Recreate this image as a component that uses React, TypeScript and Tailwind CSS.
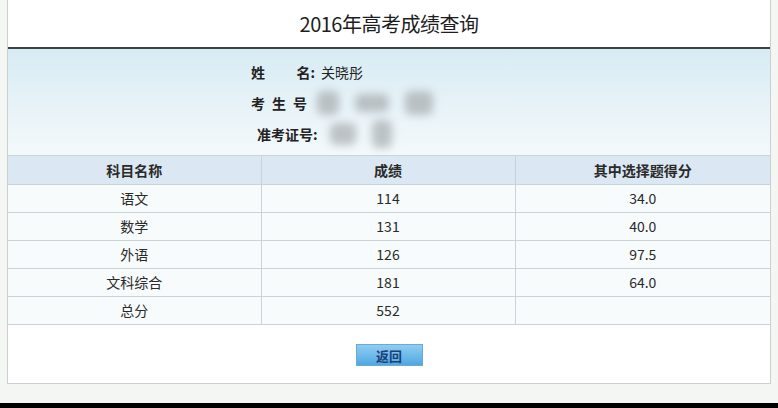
const rows = [
  { subject: "语文", score: "114", choice: "34.0" },
  { subject: "数学", score: "131", choice: "40.0" },
  { subject: "外语", score: "126", choice: "97.5" },
  { subject: "文科综合", score: "181", choice: "64.0" },
  { subject: "总分", score: "552", choice: "" },
]

const font = { fontFamily: '"Noto Sans CJK SC", "Noto Sans", sans-serif' }
const cellClass = "border-r border-b border-[#c9d3d8] text-center align-middle"

function Blur({ className }: { className: string }) {
  return <span className={`inline-block rounded-[6px] bg-[#9a9fa2] blur-[4px] opacity-60 ${className}`} />
}

export default function App() {
  return (
    <div className="w-[778px] h-[408px] bg-[#f4f6f4] flex flex-col overflow-hidden text-[#222]" style={font}>
      <div className="mx-[7px] h-[384px] bg-white border-x border-b border-[#c9d0cf] flex flex-col">
        <div className="h-[47px] flex items-center justify-center text-[20px] text-[#1e1e1e] tracking-tight">
          2016年高考成绩查询
        </div>
        <div className="h-[2px] bg-[#3c4340]" />

        <div className="h-[106px] bg-gradient-to-b from-[#d7ebf4] via-[#e6f2f7] to-[#f4f9fb] flex flex-col pl-[243px] pt-[12px] gap-[9px] text-[14px] font-bold">
          <div className="flex items-center h-[22px]">
            <span className="w-[66px] flex justify-between pr-[2px]">
              <span>姓</span>
              <span>名:</span>
            </span>
            <span className="font-normal ml-[4px]">关晓彤</span>
          </div>
          <div className="flex items-center h-[22px]">
            <span className="w-[56px] flex justify-between">
              <span>考</span>
              <span>生</span>
              <span>号</span>
            </span>
            <span className="flex items-center gap-[16px] ml-[10px]">
              <Blur className="w-[22px] h-[24px]" />
              <Blur className="w-[34px] h-[18px]" />
              <Blur className="w-[28px] h-[24px]" />
            </span>
          </div>
          <div className="flex items-center h-[22px] pl-[6px]">
            <span>准考证号:</span>
            <span className="flex items-center gap-[16px] ml-[12px]">
              <Blur className="w-[26px] h-[22px]" />
              <Blur className="w-[20px] h-[28px]" />
            </span>
          </div>
        </div>

        <table className="w-full border-collapse border-t border-[#c9d3d8] text-[14px] text-[#2a2a2a] table-fixed">
          <thead>
            <tr className="h-[29px] bg-[#dbe8f3] font-bold">
              <th className={`${cellClass} w-[253px] font-bold`}>科目名称</th>
              <th className={`${cellClass} w-[254px] font-bold`}>成绩</th>
              <th className={`border-b border-[#c9d3d8] text-center font-bold`}>其中选择题得分</th>
            </tr>
          </thead>
          <tbody>
            {rows.map((r) => (
              <tr key={r.subject} className="h-[28px] bg-[#f7fbfc]">
                <td className={cellClass}>{r.subject}</td>
                <td className={cellClass}>{r.score}</td>
                <td className="border-b border-[#c9d3d8] text-center">{r.choice}</td>
              </tr>
            ))}
          </tbody>
        </table>

        <div className="flex-1 flex justify-center pt-[19px]">
          <button className="w-[67px] h-[22px] bg-gradient-to-b from-[#8fcdf2] to-[#4fa8e2] border border-[#6fa9cf] text-[#1c3f78] text-[13px] font-bold leading-none">
            返回
          </button>
        </div>
      </div>
      <div className="flex-1" />
      <div className="h-[5px] bg-black" />
    </div>
  )
}
